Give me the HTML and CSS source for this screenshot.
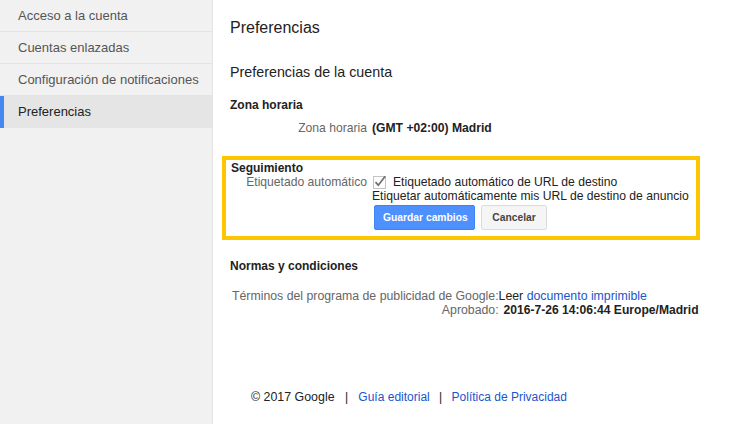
FILE: index.html
```html
<!DOCTYPE html>
<html lang="es">
<head>
<meta charset="utf-8">
<title>Preferencias</title>
<link rel="stylesheet" href="styles.css">
</head>
<body>
<div class="page">
  <nav class="sidebar">
    <a class="nav-item">Acceso a la cuenta</a>
    <a class="nav-item">Cuentas enlazadas</a>
    <a class="nav-item">Configuración de notificaciones</a>
    <a class="nav-item active">Preferencias</a>
  </nav>
  <main class="main">
    <h1 class="title">Preferencias</h1>
    <h2 class="subtitle">Preferencias de la cuenta</h2>

    <h3 class="section-head">Zona horaria</h3>
    <div class="field-row zone-row">
      <span class="label">Zona horaria</span>
      <span class="value strong">(GMT +02:00) Madrid</span>
    </div>

    <section class="highlight">
      <h3 class="section-head tight">Seguimiento</h3>
      <div class="field-row inbox">
        <span class="label">Etiquetado automático</span>
        <div class="value">
          <div class="check-line">
            <svg class="checkbox" width="14" height="14" viewBox="0 0 14 14">
              <rect x="0.5" y="1.5" width="12" height="12" fill="#fff" stroke="#c4c4c4"/>
              <path d="M2.5 7.2 L5.3 10.2 L12.2 1.2" fill="none" stroke="#6f6f6f" stroke-width="1.7"/>
            </svg>
            <span>Etiquetado automático de URL de destino</span>
          </div>
          <div class="desc">Etiquetar automáticamente mis URL de destino de anuncio</div>
          <div class="actions">
            <button class="btn btn-primary">Guardar cambios</button>
            <button class="btn btn-secondary">Cancelar</button>
          </div>
        </div>
      </div>
    </section>

    <h3 class="section-head terms-head">Normas y condiciones</h3>
    <div class="terms">
      <span class="label">Términos del programa de publicidad de Google:</span>
      <span class="value">Leer <a class="link">documento imprimible</a></span>
      <span class="label">Aprobado:</span>
      <span class="value strong approved">2016-7-26 14:06:44 Europe/Madrid</span>
    </div>

    <footer class="footer">
      <span class="copy">© 2017 Google</span>
      <span class="sep">|</span>
      <a class="link">Guía editorial</a>
      <span class="sep sep-second">|</span>
      <a class="link">Política de Privacidad</a>
    </footer>
  </main>
</div>
</body>
</html>
```

FILE: styles.css
```css
html, body {
  margin: 0;
  padding: 0;
  background: #fff;
  font-family: "Liberation Sans", Arial, sans-serif;
  color: #222;
}

.page {
  display: flex;
  height: 424px;
}

.sidebar {
  width: 212px;
  flex: none;
  background: #f1f1f1;
  border-right: 1px solid #e5e5e5;
  display: flex;
  flex-direction: column;
}

.nav-item {
  display: block;
  height: 31px;
  line-height: 31px;
  padding-left: 18px;
  font-size: 13px;
  color: #555;
  border-bottom: 1px solid #e4e4e4;
  white-space: nowrap;
}

.nav-item.active {
  height: 32px;
  line-height: 32px;
  border-bottom: none;
  background: #e5e5e5;
  color: #222;
  padding-left: 14px;
  border-left: 4px solid #4787f0;
}

.main {
  flex: 1;
  padding: 18px 0 0 17px;
  display: flex;
  flex-direction: column;
  align-items: flex-start;
}

.title {
  margin: 0;
  font-size: 16px;
  line-height: 20px;
  font-weight: normal;
  color: #222;
}

.subtitle {
  margin: 25px 0 0;
  font-size: 14.3px;
  line-height: 18px;
  font-weight: normal;
  color: #222;
}

.section-head {
  margin: 17px 0 0;
  font-size: 12px;
  line-height: 14px;
  font-weight: bold;
  color: #222;
}

.section-head.tight {
  margin: 0;
}

.field-row {
  display: grid;
  grid-template-columns: 137px auto;
  column-gap: 5px;
  font-size: 12.15px;
  line-height: 14px;
}

.zone-row {
  margin-top: 9px;
}

.field-row.inbox {
  grid-template-columns: 136px auto;
}

.label {
  text-align: right;
  color: #666;
  white-space: nowrap;
}

.value {
  color: #222;
  white-space: nowrap;
}

.strong {
  font-weight: bold;
}

.highlight {
  margin: 21px 0 0 -8px;
  width: 478px;
  box-sizing: border-box;
  border: 4px solid #fcc600;
  padding: 1px 0 6px 5px;
}

.check-line {
  display: flex;
  align-items: center;
  height: 14px;
}

.checkbox {
  flex: none;
  margin: 0 6px 0 1px;
}

.desc {
  height: 14px;
}

.actions {
  display: flex;
  gap: 6px;
  margin: 2px 0 0 2px;
}

.btn {
  height: 25px;
  box-sizing: border-box;
  border-radius: 2px;
  font-family: "Liberation Sans", Arial, sans-serif;
  font-size: 10.3px;
  font-weight: bold;
  padding: 0 8px;
  margin: 0;
  cursor: pointer;
}

.btn-primary {
  width: 101px;
  background: #4d90fe;
  border: 1px solid #3f84f2;
  color: #fff;
}

.btn-secondary {
  width: 66px;
  background: #f5f5f5;
  border: 1px solid #dcdcdc;
  color: #444;
}

.terms-head {
  margin-top: 19px;
}

.terms {
  margin: 16px 0 0 2px;
  display: grid;
  grid-template-columns: max-content auto;
  font-size: 12.3px;
  line-height: 14px;
}

.terms .approved {
  padding-left: 5px;
  font-size: 12.1px;
}

.link {
  color: #1a55cc;
  text-decoration: none;
}

.footer {
  margin: 73px 0 0 21px;
  font-size: 12px;
  line-height: 14px;
  color: #222;
  white-space: nowrap;
}

.copy {
  font-size: 12.4px;
}

.sep {
  margin: 0 7px;
}

.sep-second {
  margin: 0 6px;
}
```
